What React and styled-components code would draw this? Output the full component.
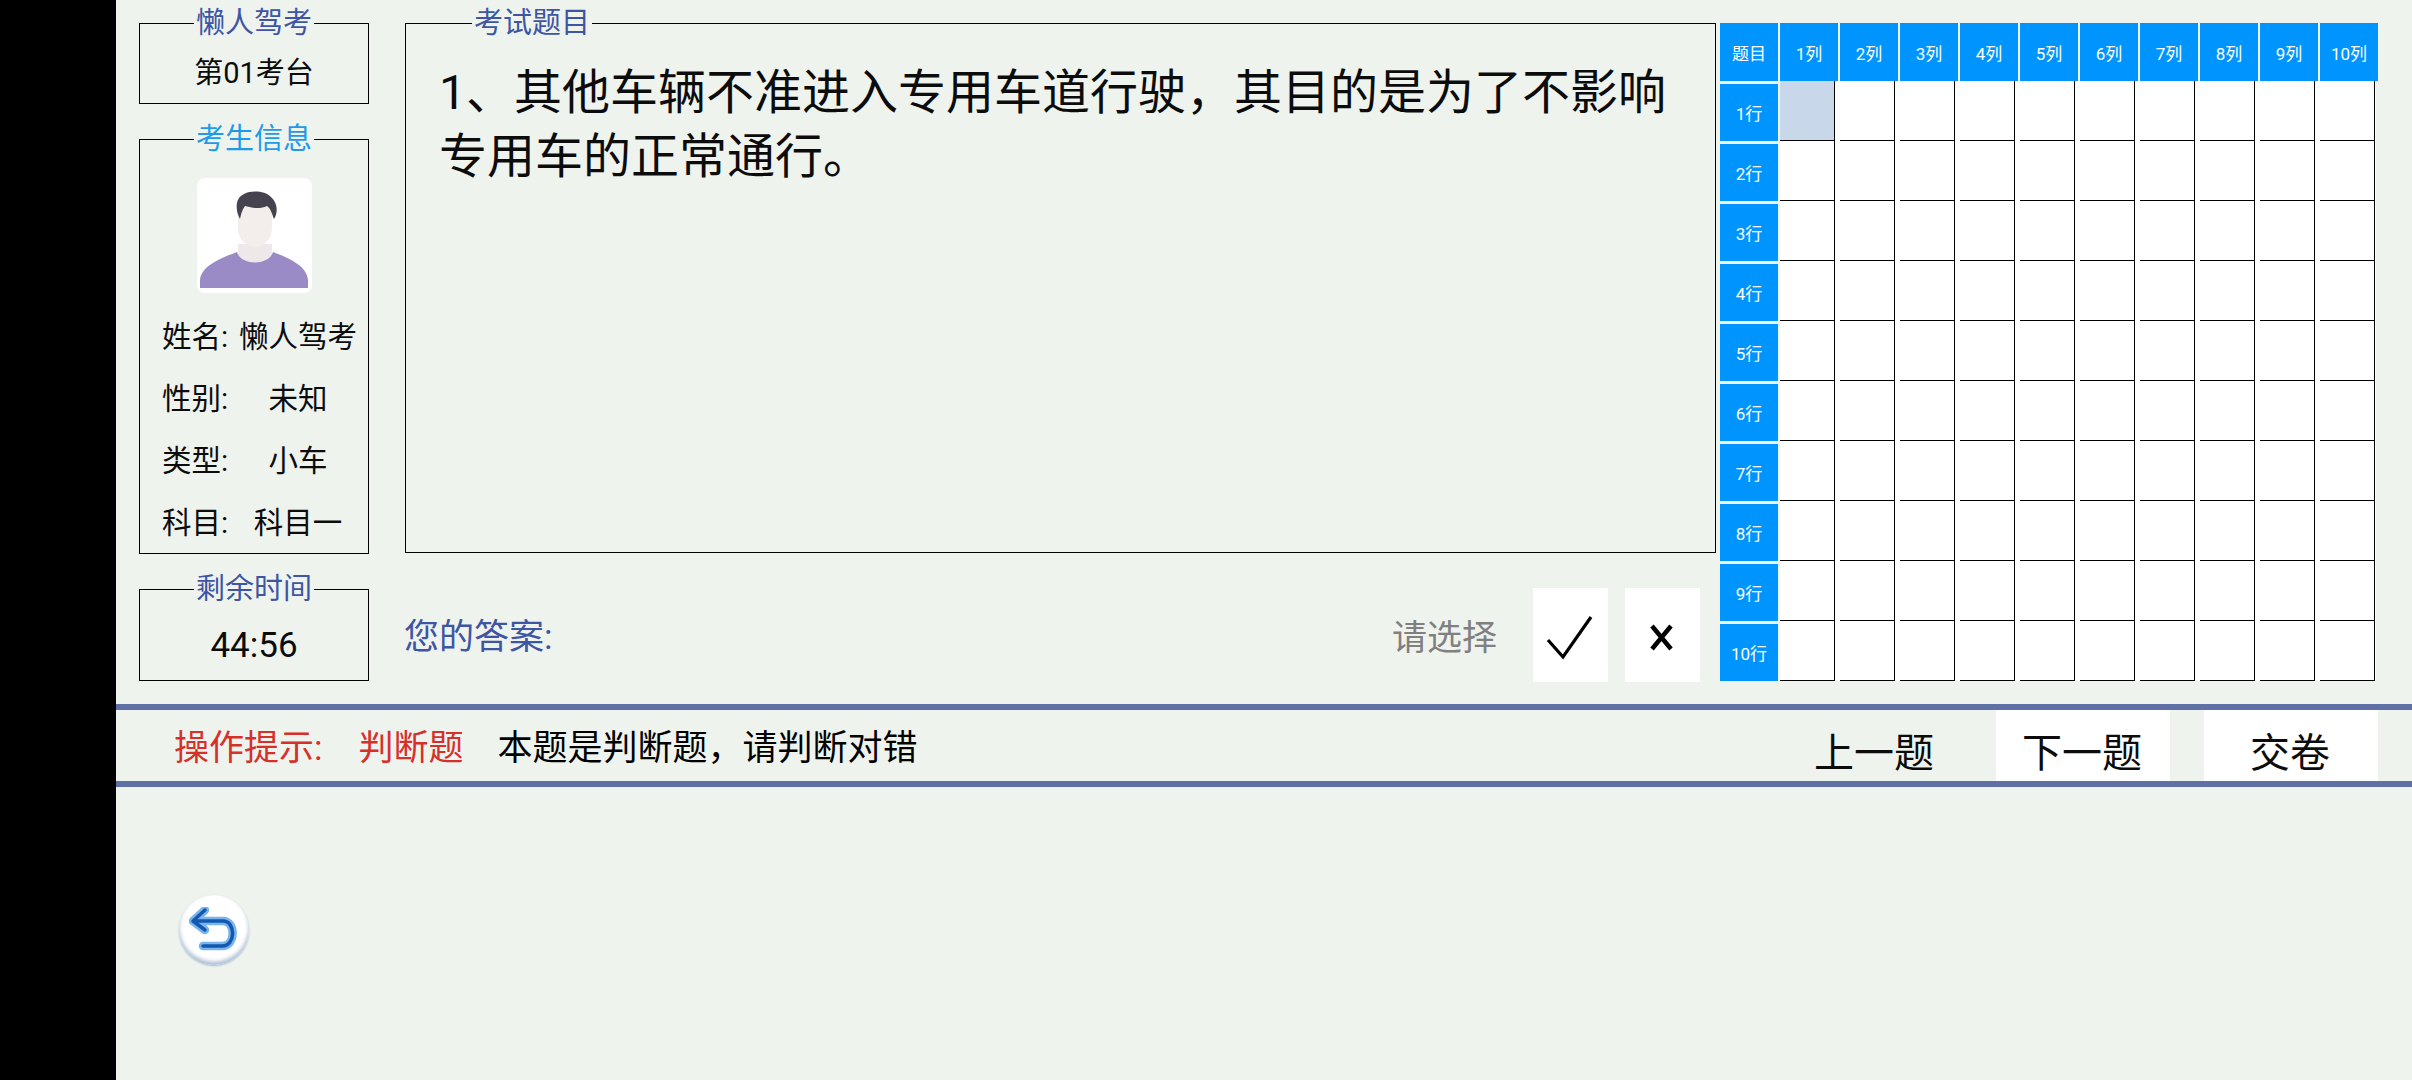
import React from "react";
import styled, { createGlobalStyle } from "styled-components";

const Global = createGlobalStyle`
  html, body { margin: 0; padding: 0; background: #eff3ee; }
  body { font-family: Roboto, "Noto Sans CJK SC", "Noto Sans", sans-serif; color: #000; overflow: hidden; }
  * { box-sizing: border-box; }
`;

const Page = styled.div`
  display: flex;
  width: 2412px;
  height: 1080px;
`;
const BlackSide = styled.div`
  width: 116px;
  background: #000;
  flex: none;
`;
const Main = styled.div`
  flex: 1;
  display: flex;
  flex-direction: column;
  background: #eff3ee;
`;
const TopArea = styled.div`
  height: 704px;
  padding: 23px 0 0 23px;
  display: flex;
`;
const LeftCol = styled.div`
  width: 230px;
  flex: none;
  display: flex;
  flex-direction: column;
  gap: 35px;
`;
const Box = styled.div`
  position: relative;
  border: 1px solid #000;
  height: ${(p) => p.$h}px;
  display: flex;
  flex-direction: column;
  align-items: center;
  justify-content: ${(p) => (p.$top ? "flex-start" : "center")};
`;
const Legend = styled.span`
  position: absolute;
  top: -19px;
  left: ${(p) => (p.$left != null ? `${p.$left}px` : "50%")};
  transform: ${(p) => (p.$left != null ? "none" : "translateX(-50%)")};
  padding: 0 2px;
  font-size: 29px;
  line-height: 36px;
  white-space: nowrap;
  background: #eff3ee;
  color: ${(p) => p.$color || "#3d55a3"};
`;
const RoomText = styled.div`
  font-size: 29px;
  line-height: 36px;
  padding-top: 18px;
  color: #0c0c0c;
`;
const Timer = styled.div`
  font-size: 35px;
  line-height: 40px;
  padding-top: 22px;
  color: #0c0c0c;
`;
const Avatar = styled.div`
  width: 115px;
  height: 115px;
  margin-top: 38px;
  margin-bottom: 10px;
  background: #fff;
  border-radius: 8px;
  overflow: hidden;
  flex: none;
  svg { display: block; }
`;
const InfoRow = styled.div`
  width: 100%;
  height: 62px;
  display: grid;
  grid-template-columns: 75px 122px;
  padding-left: 22px;
  align-items: center;
  font-size: 29.5px;
  color: #0c0c0c;
`;
const InfoValue = styled.span`
  text-align: center;
  white-space: nowrap;
`;
const CenterCol = styled.div`
  width: 1311px;
  margin-left: 36px;
  flex: none;
  display: flex;
  flex-direction: column;
`;
const QuestionText = styled.div`
  padding: 37px 36px 0 33px;
  width: 100%;
  font-size: 48px;
  line-height: 64px;
  color: #0c0c0c;
`;
const AnswerRow = styled.div`
  margin-top: 35px;
  height: 94px;
  display: flex;
  align-items: center;
  padding-right: 16px;
`;
const AnswerLabel = styled.div`
  font-size: 35px;
  color: #3d55a3;
  flex: 1;
  margin-left: -1px;
  padding-bottom: 3px;
`;
const Hint = styled.div`
  font-size: 35px;
  color: #808080;
  margin-right: 36px;
  padding-bottom: 2px;
`;
const ChoiceBtn = styled.div`
  width: 75px;
  height: 94px;
  background: #fff;
  margin-left: ${(p) => p.$ml || 0}px;
  display: flex;
  align-items: center;
  justify-content: center;
  svg { display: block; }
`;
const Sheet = styled.div`
  margin-left: 4px;
  display: grid;
  grid-template-columns: repeat(11, 60px);
  grid-template-rows: 58px repeat(10, 60px);
  align-self: flex-start;
`;
const Head = styled.div`
  width: 58px;
  height: 58px;
  background: #0094ff;
  color: #fff;
  font-size: 17px;
  display: flex;
  align-items: center;
  justify-content: center;
  white-space: nowrap;
`;
const RowHead = styled(Head)`
  height: 57px;
  margin-top: 3px;
`;
const Cell = styled.div`
  width: ${(p) => (p.$last ? 56 : 60)}px;
  height: 60px;
  background: #fff;
  padding-right: ${(p) => (p.$last ? 1 : 5)}px;
`;
const CellInner = styled.div`
  height: 100%;
  border-right: 1px solid #000;
  border-bottom: 1px solid #000;
  background: ${(p) => (p.$active ? "#c8d8ea" : "#fff")};
`;
const Bar = styled.div`
  height: 6px;
  background: #5f70a6;
  position: relative;
  z-index: 1;
  flex: none;
`;
const TipRow = styled.div`
  height: 71px;
  display: flex;
  align-items: center;
  padding: 0 34px 0 58px;
  flex: none;
`;
const TipLabel = styled.span`
  font-size: 35px;
  color: #d5302a;
  margin-right: ${(p) => p.$mr}px;
  padding-bottom: 2px;
  white-space: nowrap;
`;
const TipText = styled.span`
  font-size: 35px;
  flex: 1;
  margin-left: -2px;
  padding-bottom: 2px;
  white-space: nowrap;
`;
const NavBtn = styled.div`
  width: 174px;
  height: 71px;
  margin-left: ${(p) => p.$ml || 0}px;
  background: ${(p) => (p.$plain ? "transparent" : "#fff")};
  font-size: 40px;
  display: flex;
  align-items: center;
  justify-content: center;
  padding: 8px 2px 0 0;
  color: #0c0c0c;
`;
const Rest = styled.div`
  flex: 1;
  padding: 108px 0 0 63px;
`;
const BackBtn = styled.div`
  width: 70px;
  height: 70px;
  border-radius: 50%;
  background: radial-gradient(circle at 50% 44%, #fff 66%, #eef3f8 80%, #d5e0ec 100%);
  box-shadow: inset 0 -3px 4px #a9bcd4, 0 1px 2px #a8b8cc;
  display: flex;
  align-items: center;
  justify-content: center;
  svg { display: block; }
`;

const info = [
  ["姓名:", "懒人驾考"],
  ["性别:", "未知"],
  ["类型:", "小车"],
  ["科目:", "科目一"],
];
const cols = Array.from({ length: 10 }, (_, i) => i + 1);

const AvatarArt = () => (
  <svg width="115" height="115" viewBox="0 0 115 115">
    <path d="M41 66 L41 76 L34 80 L58 96 L82 80 L75 76 L75 66 Z" fill="#efe8ea" />
    <path d="M3 110 L3 102 C4 88 24 80 40 74 C44 88 72 88 76 74 C92 80 110 88 111 102 L111 110 Z" fill="#9a8bc6" />
    <path d="M41 30 C41 22 75 22 75 30 L75 50 C75 62 66 69 58 69 C50 69 41 62 41 50 Z" fill="#f3edec" />
    <path d="M43 41 C38 32 38 20 47 16 C55 12 68 13 74 19 C81 25 81 35 77 41 C75 36 74 31 70 28 C62 32 52 29 48 28 C45 32 44 36 43 41 Z" fill="#46434f" />
  </svg>
);

const BackIcon = () => (
  <svg width="50" height="46" viewBox="-25 -23 50 46">
    <g fill="none" strokeLinecap="round" strokeLinejoin="round">
      <path d="M-9 -20 L-21 -9 L-9 0 M-21 -9 L9 -9 C22 -9 22 16 8 16 L-11 16" stroke="#79b5ec" strokeWidth="8.5" />
      <path d="M-9 -20 L-21 -9 L-9 0 M-21 -9 L9 -9 C22 -9 22 16 8 16 L-11 16" stroke="#1358ae" strokeWidth="3.5" />
    </g>
  </svg>
);

export default function App() {
  return (
    <Page>
      <Global />
      <BlackSide />
      <Main>
        <TopArea>
          <LeftCol>
            <Box $h={81}>
              <Legend>懒人驾考</Legend>
              <RoomText>第01考台</RoomText>
            </Box>
            <Box $h={415} $top>
              <Legend $color="#1e9be8">考生信息</Legend>
              <Avatar><AvatarArt /></Avatar>
              {info.map(([k, v]) => (
                <InfoRow key={k}>
                  <span>{k}</span>
                  <InfoValue>{v}</InfoValue>
                </InfoRow>
              ))}
            </Box>
            <Box $h={92}>
              <Legend>剩余时间</Legend>
              <Timer>44:56</Timer>
            </Box>
          </LeftCol>
          <CenterCol>
            <Box $h={530} $top>
              <Legend $left={66}>考试题目</Legend>
              <QuestionText>1、其他车辆不准进入专用车道行驶，其目的是为了不影响专用车的正常通行。</QuestionText>
            </Box>
            <AnswerRow>
              <AnswerLabel>您的答案:</AnswerLabel>
              <Hint>请选择</Hint>
              <ChoiceBtn>
                <svg width="75" height="94" viewBox="0 0 75 94">
                  <path d="M15 52 L30 69 L58 29" fill="none" stroke="#000" strokeWidth="3.2" />
                </svg>
              </ChoiceBtn>
              <ChoiceBtn $ml={17}>
                <svg width="75" height="94" viewBox="0 0 75 94">
                  <path d="M27 38 L46 61 M46 38 L27 61" fill="none" stroke="#000" strokeWidth="4.5" />
                </svg>
              </ChoiceBtn>
            </AnswerRow>
          </CenterCol>
          <Sheet>
            <Head>题目</Head>
            {cols.map((c) => <Head key={c}>{c}列</Head>)}
            {cols.map((r) => (
              <React.Fragment key={r}>
                <RowHead>{r}行</RowHead>
                {cols.map((c) => (
                  <Cell key={c} $last={c === 10}>
                    <CellInner $active={r === 1 && c === 1} />
                  </Cell>
                ))}
              </React.Fragment>
            ))}
          </Sheet>
        </TopArea>
        <Bar />
        <TipRow>
          <TipLabel $mr={36}>操作提示:</TipLabel>
          <TipLabel $mr={36}>判断题</TipLabel>
          <TipText>本题是判断题，请判断对错</TipText>
          <NavBtn $plain>上一题</NavBtn>
          <NavBtn $ml={34}>下一题</NavBtn>
          <NavBtn $ml={34}>交卷</NavBtn>
        </TipRow>
        <Bar />
        <Rest>
          <BackBtn><BackIcon /></BackBtn>
        </Rest>
      </Main>
    </Page>
  );
}
